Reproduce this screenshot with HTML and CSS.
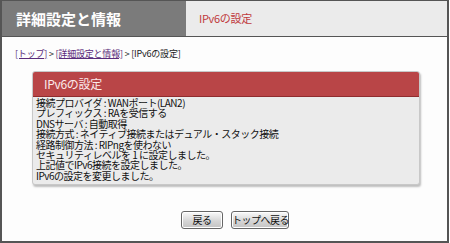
FILE: index.html
```html
<!DOCTYPE html>
<html lang="ja">
<head>
<meta charset="utf-8">
<link rel="stylesheet" href="styles.css">
</head>
<body>
<div class="frame">
  <div class="header">
    <div class="title">詳細設定と情報</div>
    <div class="subtitle">IPv6の設定</div>
  </div>
  <div class="content">
    <div class="crumbs"><a href="#">[トップ]</a> &gt; <a href="#">[詳細設定と情報]</a> &gt; [IPv6の設定]</div>
    <div class="panel">
      <div class="panel-head">IPv6の設定</div>
      <div class="panel-body">
        <div>接続プロバイダ : WANポート(LAN2)</div>
        <div>プレフィックス : RAを受信する</div>
        <div>DNSサーバ : 自動取得</div>
        <div>接続方式 : ネイティブ接続またはデュアル・スタック接続</div>
        <div>経路制御方法 : RIPngを使わない</div>
        <div>セキュリティレベルを 1 に設定しました。</div>
        <div>上記値でIPv6接続を設定しました。</div>
        <div>IPv6の設定を変更しました。</div>
      </div>
    </div>
    <div class="buttons">
      <button class="btn btn-back">戻る</button>
      <button class="btn btn-top">トップへ戻る</button>
    </div>
  </div>
</div>
</body>
</html>
```
FILE: styles.css
```css
html, body {
  margin: 0;
  padding: 0;
  background: #ffffff;
}
body {
  font-family: "Noto Sans CJK JP", "Noto Sans", sans-serif;
  color: #222;
}
.frame {
  width: 449px;
  height: 243px;
  box-sizing: border-box;
  border: 1px solid #555;
  border-left-width: 2px;
  border-bottom-width: 2px;
  border-right-width: 2px;
  display: flex;
  flex-direction: column;
  background: #fdfdfd;
}
.header {
  height: 35px;
  display: flex;
  border-bottom: 1px solid #555;
  flex: none;
}
.title {
  width: 184px;
  background: #7b7b7b;
  color: #fff;
  font-weight: bold;
  font-size: 15px;
  line-height: 35px;
  padding-left: 14px;
  box-sizing: border-box;
  white-space: nowrap;
}
.subtitle {
  flex: 1;
  background: #ebebeb;
  color: #c0393b;
  font-size: 11px;
  letter-spacing: -0.3px;
  line-height: 35px;
  padding-left: 13px;
}
.content {
  flex: 1;
  display: flex;
  flex-direction: column;
  padding: 11px 0 0 13px;
}
.crumbs {
  font-size: 9px;
  line-height: 12px;
  color: #222;
  letter-spacing: -0.2px;
}
.crumbs a {
  color: #5a2a7a;
  text-decoration: underline;
}
.panel {
  margin-top: 11px;
  margin-left: 17px;
  width: 386px;
  background: #ebebeb;
  border: 1px solid #c8c8c8;
  border-radius: 3px;
  box-shadow: 1px 2px 2px rgba(0,0,0,0.25);
  overflow: hidden;
}
.panel-head {
  background: #b94547;
  color: #fbeaea;
  font-size: 12px;
  letter-spacing: -0.3px;
  line-height: 24px;
  height: 24px;
  padding-left: 11px;
  border-bottom: 1px solid #8f2c2e;
}
.panel-body {
  padding: 1px 0 3px 3px;
  font-size: 10px;
  letter-spacing: -0.5px;
  line-height: 10.4px;
  color: #111;
}
.buttons {
  display: flex;
  gap: 8px;
  margin-top: 26px;
  margin-left: 166px;
}
.btn {
  font-family: "Noto Sans CJK JP", sans-serif;
  font-size: 10px;
  letter-spacing: -0.5px;
  white-space: nowrap;
  height: 18px;
  padding: 0;
  border: 1px solid #666;
  border-radius: 3px;
  background: linear-gradient(#fafafa, #d6d6d6 55%, #c4c4c4);
  box-shadow: inset 0 0 0 1px #fff;
  color: #111;
  line-height: 16px;
}
.btn-back { width: 42px; }
.btn-top { width: 58px; }
```
